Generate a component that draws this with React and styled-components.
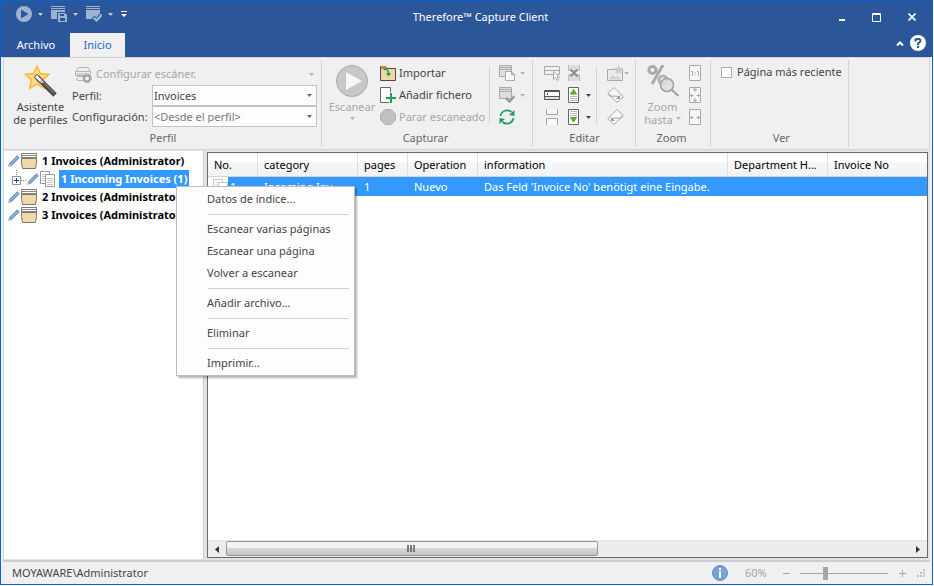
import React, { useState } from "react";
import styled, { createGlobalStyle, css } from "styled-components";

const GlobalStyle = createGlobalStyle`
  * {
    box-sizing: border-box;
  }
  body {
    margin: 0;
    background: #fff;
  }
  body, button, select, input, table {
    font-family: "Noto Sans", "Open Sans", sans-serif;
    font-size: 11px;
    line-height: 13px;
    color: #444;
  }
  button {
    margin: 0;
    padding: 0;
    border: 0;
    background: none;
  }
  svg {
    display: block;
    flex: none;
  }
`;

const Window = styled.div`
  display: flex;
  flex-direction: column;
  min-height: calc(100vh - 1px);
  margin: 0 1px 1px 0;
  border: 1px solid #0a64cc;
  background: #f0f0f0;
  position: relative;
`;

/* ---------- title bar ---------- */

const TitleBar = styled.header`
  display: flex;
  align-items: center;
  height: 32px;
  padding: 0 3px 0 15px;
  background: #2b579a;
  color: #fff;
`;

const QuickAccess = styled.div`
  display: flex;
  align-items: flex-start;
  width: 121px;
  height: 24px;
`;

const QuickButton = styled.button`
  display: flex;
  align-items: center;
  gap: 6px;
  width: ${(p) => p.$width || 35}px;
  height: 18px;
  color: #9fb3d3;
`;

const Title = styled.h1`
  flex: 1;
  margin: 0;
  text-align: center;
  font-size: 11px;
  font-weight: 400;
  line-height: 16px;
`;

const WindowButton = styled.button`
  display: flex;
  align-items: center;
  justify-content: center;
  width: 35px;
  height: 30px;
  color: #fff;
`;

const TabBar = styled.nav`
  display: flex;
  align-items: stretch;
  height: 24px;
  padding: 0 6px 0 1px;
  background: #2b579a;
`;

const Tab = styled.button`
  min-width: ${(p) => (p.$active ? 55 : 68)}px;
  padding: 0 12px 2px;
  color: #fff;
  ${(p) =>
    p.$active &&
    css`
      background: #f0f0f0;
      color: #1a66cc;
    `}
`;

const TabTools = styled.div`
  display: flex;
  align-items: center;
  gap: 6px;
  margin-left: auto;
  padding-bottom: 4px;
  color: #fff;
`;

/* ---------- ribbon ---------- */

const Ribbon = styled.section`
  display: flex;
  margin: 0 2px;
  border: 1px solid #d4d4d4;
`;

const Group = styled.div`
  display: flex;
  flex-direction: column;
  margin: 2px 0;
  padding: 2px ${(p) => p.$right || 0}px 0 ${(p) => p.$left || 0}px;
  border-right: 1px solid #d4d4d4;
`;

const GroupBody = styled.div`
  display: flex;
  min-height: 66px;
`;

const GroupLabel = styled.div`
  height: 19px;
  text-align: center;
  line-height: 19px;
  color: #666;
`;

const BigButton = styled.button`
  display: flex;
  flex-direction: column;
  align-items: center;
  width: ${(p) => p.$width}px;
  padding-top: 3px;
  white-space: nowrap;
  color: ${(p) => (p.disabled ? "#a6a6a6" : "#444")};
  svg:first-child {
    margin-bottom: 3px;
  }
`;

const CaptionRow = styled.span`
  display: flex;
  align-items: center;
  justify-content: center;
  gap: 3px;
  height: 13px;
`;

const Column = styled.div`
  display: flex;
  flex-direction: column;
  width: ${(p) => (p.$width ? `${p.$width}px` : "auto")};
`;

const Tool = styled.button`
  display: flex;
  align-items: center;
  gap: 3px;
  height: 22px;
  white-space: nowrap;
  color: ${(p) => (p.disabled ? "#a6a6a6" : "#444")};
`;

const ToolText = styled.span`
  padding-bottom: 2px;
`;

const ArrowTool = styled(Tool)`
  gap: 5px;
  padding-left: 5px;
`;

const IconTool = styled(Tool)`
  width: 24px;
  justify-content: center;
`;

const PageTool = styled(Tool)`
  gap: 6px;
  padding-left: 4px;
`;

const PictureTool = styled(Tool)`
  gap: 0;
  padding-left: 5px;
`;

const Divider = styled.div`
  width: 1px;
  margin: 5px ${(p) => p.$gap}px 4px;
  background: #d4d4d4;
`;

const ProfileForm = styled.div`
  display: grid;
  grid-template-columns: 80px 165px;
  grid-template-rows: 23px 21px 21px;
  align-items: center;
`;

const ScannerButton = styled(Tool)`
  grid-column: 1 / -1;
  gap: 4px;
  padding: 2px 3px 0;
  svg:last-child {
    margin-left: auto;
  }
`;

const SelectBox = styled.div`
  position: relative;
  svg {
    position: absolute;
    right: 5px;
    top: 9px;
    pointer-events: none;
  }
`;

const Select = styled.select`
  display: block;
  appearance: none;
  width: 100%;
  height: 21px;
  padding: 0 16px 0 1px;
  border: 1px solid #c3c3c3;
  border-radius: 0;
  background: #fdfdfd;
  color: ${(p) => (p.$muted ? "#777" : "#444")};
`;

const CheckLabel = styled.label`
  display: flex;
  align-items: center;
  gap: 5px;
  height: 20px;
  white-space: nowrap;
`;

const CheckBox = styled.input`
  appearance: none;
  width: 11px;
  height: 11px;
  margin: 0;
  border: 1px solid #ababab;
  background: #fff;
  &:checked {
    background: #1a66cc;
  }
`;

/* ---------- workspace ---------- */

const Workspace = styled.main`
  flex: 1;
  display: flex;
  gap: 3px;
  margin: 0 2px;
  padding: 1px 2px 1px 0;
  border-bottom: 2px solid #cdcdcd;
  border-left: 1px solid #d4d4d4;
  background: #e3e3e3;
`;

const TreePane = styled.ul`
  width: 200px;
  margin: 0;
  padding: 1px 0 0 4px;
  list-style: none;
  background: #fff;
  border-right: 1px solid #cdcdcd;
  overflow: hidden;
`;

const TreeRow = styled.li`
  display: flex;
  align-items: center;
  gap: 1px;
  height: 18px;
  white-space: nowrap;
  font-weight: 700;
  color: #000;
`;

const TreeText = styled.span`
  margin-left: 2px;
  padding: 0 2px;
  line-height: 18px;
  ${(p) =>
    p.$selected &&
    css`
      background: #3399ff;
      color: #fff;
    `}
`;

const ListPane = styled.section`
  flex: 1;
  min-width: 0;
  display: flex;
  flex-direction: column;
  margin: 1px 0;
  border: 1px solid #696969;
  background: #fff;
`;

const TableArea = styled.div`
  flex: 1;
  overflow: hidden;
`;

const Table = styled.table`
  width: 100%;
  table-layout: fixed;
  border-collapse: separate;
  border-spacing: 0;
  color: #000;
`;

const Th = styled.th`
  width: ${(p) => (p.$width ? `${p.$width}px` : "auto")};
  height: 24px;
  padding: 0 6px;
  text-align: left;
  font-weight: 400;
  white-space: nowrap;
  background: linear-gradient(#fff 0 38%, #f6f7f8 40%, #f1f2f4 100%);
  border-right: 1px solid #dfe0e2;
  border-bottom: 1px solid #d5d5d5;
  &:last-child {
    border-right: 0;
  }
`;

const Td = styled.td`
  height: 19px;
  padding: 0 6px;
  white-space: nowrap;
  overflow: hidden;
  text-overflow: ellipsis;
  background: #3399ff;
  color: #fff;
`;

const IconTd = styled(Td)`
  padding: 0 0 0 5px;
  background: linear-gradient(90deg, #fff 20px, #3399ff 20px);
`;

const NumberCell = styled.span`
  display: flex;
  align-items: center;
  gap: 1px;
`;

const ScrollBar = styled.div`
  display: flex;
  align-items: stretch;
  height: 17px;
  border-top: 1px solid #e3e3e3;
  background: #ececec;
`;

const ScrollArrow = styled.button`
  display: flex;
  align-items: center;
  justify-content: center;
  width: 18px;
  color: #333;
`;

const ScrollTrack = styled.div`
  flex: 1;
`;

const ScrollThumb = styled.div`
  display: flex;
  align-items: center;
  justify-content: center;
  width: 54.4%;
  height: 15px;
  border: 1px solid #979797;
  border-radius: 2px;
  background: linear-gradient(#f3f3f3 0 45%, #d8d8da 50%, #c3c4c7);
`;

/* ---------- context menu ---------- */

const Menu = styled.div`
  position: absolute;
  left: 175px;
  top: 185px;
  width: 179px;
  padding: 1px 5px 1px 30px;
  border: 1px solid #bcbcbc;
  background: #fdfdfd;
  box-shadow: 2px 2px 2px rgba(0, 0, 0, 0.3);
`;

const MenuItem = styled.button`
  display: block;
  width: 100%;
  height: 22px;
  padding-bottom: 2px;
  text-align: left;
`;

const MenuLine = styled.hr`
  height: 1px;
  margin: 4px 0 3px 1px;
  border: 0;
  background: #d0d0d0;
`;

/* ---------- status bar ---------- */

const StatusBar = styled.footer`
  display: flex;
  align-items: center;
  height: 22px;
  padding: 0 6px 0 11px;
`;

const StatusText = styled.span`
  padding-bottom: 2px;
`;

const ZoomTools = styled.div`
  display: flex;
  align-items: center;
  margin-left: auto;
  color: #a6a6a6;
`;

const ZoomValue = styled.output`
  width: 35px;
  margin-left: 17px;
  padding-bottom: 2px;
`;

const StepButton = styled.button`
  display: flex;
  align-items: center;
  justify-content: center;
  width: 12px;
  height: 16px;
  color: #a6a6a6;
`;

const Slider = styled.input`
  appearance: none;
  width: 88px;
  height: 14px;
  margin: 0 8px;
  background: linear-gradient(#a6a6a6, #a6a6a6) center / 100% 1px no-repeat;
  &::-webkit-slider-thumb {
    appearance: none;
    width: 5px;
    height: 13px;
    background: #a6a6a6;
  }
`;

const Grip = styled.svg`
  margin-left: 9px;
  align-self: flex-end;
`;

/* ---------- icons ---------- */

const Icon = ({ w = 16, h = 16, children }) => (
  <svg width={w} height={h} viewBox={`0 0 ${w} ${h}`} fill="none" aria-hidden="true">
    {children}
  </svg>
);

const Caret = ({ color = "#444" }) => (
  <Icon w={5} h={3}>
    <path d="M0 0h5L2.5 3z" fill={color} />
  </Icon>
);

const GRAY = "#a9a9a9";

const PlayQuick = () => (
  <Icon>
    <circle cx="8" cy="8" r="8" fill="#9fb3d3" />
    <path d="M5 3.5v9L12.5 8z" fill="#2b579a" />
  </Icon>
);

const DocLines = ({ color, lines }) => (
  <>
    <path d="M0 0h14v13H0z" fill={color} />
    <path d="M0 1.5h14M0 3.5h14" stroke={lines} />
  </>
);

const SaveQuick = () => (
  <Icon>
    <DocLines color="#9fb3d3" lines="#2b579a" />
    <path d="M6 6h8l2 2v8H6z" fill="#2b579a" />
    <path d="M7 7h7l2 2v7H7z" fill="#9fb3d3" />
    <path d="M9 8h4v2H9zM9 12h5v3H9z" fill="#2b579a" />
  </Icon>
);

const CheckQuick = () => (
  <Icon>
    <DocLines color="#9fb3d3" lines="#2b579a" />
    <path d="M7 11l3.5 3.5L16 8" stroke="#2b579a" strokeWidth="4" />
    <path d="M7.5 11.5l3 3L16 8.5" stroke="#9fb3d3" strokeWidth="2.4" />
  </Icon>
);

const Wand = () => (
  <Icon w={34} h={32}>
    <path d="M13 1l3.400 7.500 8.400.8-6.300 5.700 1.800 8.300L13 19l-7.300 4.300 1.800-8.300L1.200 9.300l8.400-.8z" fill="#fddc7c" stroke="#fbb638" strokeWidth="1.500" />
    <path d="M13 12l18 18" stroke="#4a4a4a" strokeWidth="5" />
    <path d="M17 15l13 13" stroke="#777" strokeWidth="1.500" />
    <path d="M13 12l4.500 4.500" stroke="#fff" strokeWidth="3" strokeLinecap="round" />
    <path d="M11.500 10.500l2-1 5 5.500-3 3-5-5.500z" stroke="#4a4a4a" />
  </Icon>
);

const Scanner = () => (
  <Icon w={17} h={17}>
    <path d="M1.500 5.500L3 1.500h10l2.500 4zM.5 5.500h15v4H.5zM2 10.500h6M1.500 12l1 2.500H8" fill="#eee" stroke="#b5b5b5" />
    <path d="M2 8h12" stroke="#b5b5b5" />
    <circle cx="12" cy="12.5" r="3" stroke="#a0a0a0" strokeWidth="2" fill="#eee" />
    <circle cx="12" cy="12.5" r="4.3" stroke="#a0a0a0" strokeDasharray="1.7 1.7" />
  </Icon>
);

const PlayBig = () => (
  <Icon w={32} h={32}>
    <circle cx="16" cy="16" r="15.5" fill="#c8c8c8" stroke="#a9a9a9" />
    <path d="M10 7v18l16-9z" fill="#f7f7f7" />
  </Icon>
);

const ImportIcon = () => (
  <Icon>
    <path d="M.5 15.5v-14h5l1.500 2h8.500v12z" fill="#efd8a8" stroke="#55483c" />
    <path d="M1 3V1h4.500L7 4H1z" fill="#c08a50" />
    <path d="M3.500 4.500c3.500-1 5.500 1 5 5" stroke="#1f9a55" strokeWidth="1.400" />
    <path d="M6 8h5l-2.500 3.500z" fill="#1f9a55" />
  </Icon>
);

const AddFile = () => (
  <Icon>
    <path d="M.5.5h10v15H.5z" fill="#fff" stroke="#666" />
    <path d="M11 5v11M5 11h11" stroke="#f4f4f4" strokeWidth="4" />
    <path d="M11 6v10M6 11h10" stroke="#1f9f59" strokeWidth="2" />
  </Icon>
);

const StopIcon = () => (
  <Icon>
    <path d="M5 .5h6L15.500 5v6L11 15.500H5L.5 11V5z" fill="#c0c0c0" stroke="#b0b0b0" />
  </Icon>
);

const DocStack = ({ check }) => (
  <Icon>
    <path d="M.5.5h12v11H.5z" fill="#dedede" stroke={GRAY} />
    <path d="M0 2.500h13M0 4.500h13" stroke={GRAY} />
    {check ? (
      <path d="M7 11l3.500 3.500L15.500 9" stroke="#9c9c9c" strokeWidth="2.500" />
    ) : (
      <path d="M6.500 6.500h6l3 3v6h-9zM12.500 6.500v3h3" fill="#f7f7f7" stroke={GRAY} />
    )}
  </Icon>
);

const Refresh = () => (
  <Icon>
    <path d="M1.500 7A6.700 6.700 0 0 1 12.500 3M14.500 9A6.700 6.700 0 0 1 3.500 13" stroke="#1f9f59" strokeWidth="1.700" />
    <path d="M15.500 1v6l-5.500-1zM.5 15V9l5.500 1z" fill="#1f9f59" />
  </Icon>
);

const SelectField = () => (
  <Icon>
    <path d="M.5 1.500h15v8H.5zM1 5.500h14" stroke={GRAY} />
    <path d="M9.500 6.500v8l2-2 1.500 3 1.500-1-1.500-2.500h2.500z" fill="#fff" stroke={GRAY} />
  </Icon>
);

const FieldIcon = () => (
  <Icon>
    <path d="M.5 3.500h15v9H.5z" fill="#fff" stroke="#555" />
    <path d="M0 4.500h16M0 9.500h16M3.500 6v2" stroke="#555" />
    <path d="M1 10h14v2H1z" fill="#dcdcdc" />
  </Icon>
);

const SplitDoc = ({ cross }) => (
  <Icon w={12}>
    <path d="M.5 0v5.500h11V0M.5 16V9.500h11V16" fill={cross ? "#ddd" : "#f7f7f7"} stroke={cross ? "#bcbcbc" : GRAY} />
    {cross && <path d="M2.500 4.500l7 7M9.500 4.500l-7 7" stroke="#8d8d8d" strokeWidth="2" />}
  </Icon>
);

const MovePage = ({ down }) => (
  <Icon w={12}>
    <path d="M.5.5h10v15H.5z" fill="#fff" stroke="#666" />
    <path d={down ? "M2 2.5h7M2 4.5h7M2 6.5h7" : "M2 9.5h7M2 11.5h7M2 13.5h7"} stroke="#bbb" />
    <path d={down ? "M2.500 8.500h6L5.500 13z" : "M2.500 7h6L5.500 2.500z"} fill="#7ab800" stroke="#3fa535" />
  </Icon>
);

const PictureStar = () => (
  <Icon w={17}>
    <path d="M.5 4.500h15v11H.5z" fill="#ececec" stroke={GRAY} />
    <path d="M1.500 14.500l4-5 3 3 2.500-2 3.500 4z" fill="#d2d2d2" />
    <path d="M11.500 0l1.500 3 3.500.3-2.500 2.400.6 3.300-3.100-1.600L8.400 9 9 5.700 6.500 3.300 10 3z" fill="#cbcbcb" />
  </Icon>
);

const Rotate = ({ left }) => (
  <Icon w={17}>
    <g transform={left ? "matrix(-1 0 0 1 17 0)" : undefined}>
      <path d="M7 .6l9.300 9.200-6.300 5.700L.7 6.500z" fill="#f8f8f8" stroke={GRAY} />
      <path d="M1.500 6.500C4 12 9 7 12 10.500" stroke="#999" />
      <path d="M13 8v4H9z" fill="#999" />
    </g>
  </Icon>
);

const ZoomBig = () => (
  <Icon w={34} h={32}>
    <circle cx="6.5" cy="5" r="3.6" stroke="#aaa" strokeWidth="3" />
    <path d="M17 0L6 19" stroke="#aaa" strokeWidth="3" />
    <circle cx="17" cy="15" r="4" stroke="#b5b5b5" strokeWidth="3" />
    <circle cx="21" cy="20" r="6.5" fill="#ddd" fillOpacity=".85" stroke="#a0a0a0" strokeWidth="1.500" />
    <path d="M26 25l6.500 6" stroke="#a0a0a0" strokeWidth="2" />
  </Icon>
);

const ZoomOne = () => (
  <Icon w={12}>
    <path d="M.5.5h11v15H.5z" fill="#f7f7f7" stroke={GRAY} />
    <path d="M2 6.500h1.500V11M8 6.500h1.500V11M6 7v1M6 9v1" stroke={GRAY} />
  </Icon>
);

const FitIcon = ({ page }) => (
  <Icon w={12}>
    <path d="M.5.5h11v15H.5z" fill="#f7f7f7" stroke={GRAY} />
    <path d="M1 8.500h3.500M7.500 8.500H11M2.500 7v3M9.500 7v3" stroke={GRAY} />
    {page && <path d="M6 1v4M6 11v4M4 2.500h4M4 13.500h4" stroke={GRAY} />}
  </Icon>
);

const Pencil = () => (
  <Icon w={12} h={12}>
    <path d="M2 10L10.500 1.500" stroke="#5b82b0" strokeWidth="3.400" />
    <path d="M2 10L10.300 1.700" stroke="#8fb2da" strokeWidth="1.800" />
    <path d="M0 12l1-3.500L3.500 11z" fill="#b9ad97" />
  </Icon>
);

const BoxIcon = () => (
  <Icon w={16} h={16}>
    <path d="M.5.5h15v5H.5z" fill="#fff" stroke="#777" />
    <path d="M0 2.500h16M0 4.500h16" stroke="#888" />
    <path d="M.5 5.500h15v4l-1 6h-13l-1-6z" fill="#efd9ac" stroke="#8a7355" />
  </Icon>
);

const PagesIcon = ({ faded }) => (
  <Icon w={16} h={16}>
    <g opacity={faded ? 0.55 : 1}>
      <path d="M.5.5h9v12h-9z" fill="#fff" stroke="#999" />
      <path d="M2 3.500h4M2 5.500h4M2 7.500h4M2 9.500h4" stroke="#c4c4c4" />
      <path d="M5.500 3.500h9v12h-9z" fill="#fff" stroke="#999" />
      <path d="M7 7.500h6M7 9.500h6M7 11.500h6M7 13.500h6" stroke="#c4c4c4" />
    </g>
  </Icon>
);

const Branch = () => (
  <Icon w={18} h={18}>
    <path d="M8.500 0v6M13 10.500h5" stroke="#888" strokeDasharray="1 1" />
    <path d="M4.500 6.500h8v8h-8z" fill="#fff" stroke="#919191" />
    <path d="M6 10.500h5M8.500 8v5" stroke="#23458c" />
  </Icon>
);

/* ---------- data ---------- */

const columns = [
  { name: "No.", width: 50 },
  { name: "category", width: 100 },
  { name: "pages", width: 50 },
  { name: "Operation", width: 70 },
  { name: "information", width: 250 },
  { name: "Department H...", width: 100 },
  { name: "Invoice No" },
];

const menuGroups = [
  ["Datos de índice..."],
  ["Escanear varias páginas", "Escanear una página", "Volver a escanear"],
  ["Añadir archivo..."],
  ["Eliminar"],
  ["Imprimir..."],
];

/* ---------- sections ---------- */

const Header = () => (
  <>
    <TitleBar>
      <QuickAccess>
        <QuickButton aria-label="Escanear">
          <PlayQuick />
          <Caret color="#c9c9c9" />
        </QuickButton>
        <QuickButton aria-label="Guardar">
          <SaveQuick />
          <Caret color="#c9c9c9" />
        </QuickButton>
        <QuickButton aria-label="Comprobar">
          <CheckQuick />
          <Caret color="#c9c9c9" />
        </QuickButton>
        <QuickButton $width={7} aria-label="Personalizar">
          <Icon w={6} h={6}>
            <path d="M0 .5h6" stroke="#fff" />
            <path d="M0 3h6L3 6z" fill="#fff" />
          </Icon>
        </QuickButton>
      </QuickAccess>
      <Title>Therefore™ Capture Client</Title>
      <WindowButton aria-label="Minimizar">
        <Icon w={10} h={10}>
          <path d="M2 7h6v2H2z" fill="#fff" />
        </Icon>
      </WindowButton>
      <WindowButton aria-label="Maximizar">
        <Icon w={9} h={9}>
          <path d="M.5.5h8v8h-8zM0 1.500h9" stroke="#fff" />
        </Icon>
      </WindowButton>
      <WindowButton aria-label="Cerrar">
        <Icon w={8} h={8}>
          <path d="M.5.5l7 7M7.500.5l-7 7" stroke="#fff" strokeWidth="1.600" />
        </Icon>
      </WindowButton>
    </TitleBar>
    <TabBar>
      <Tab>Archivo</Tab>
      <Tab $active>Inicio</Tab>
      <TabTools>
        <button aria-label="Contraer la cinta">
          <Icon w={8} h={5}>
            <path d="M1 4.500l3-3 3 3" stroke="#fff" strokeWidth="2" />
          </Icon>
        </button>
        <button aria-label="Ayuda">
          <Icon>
            <circle cx="8" cy="8" r="8" fill="#fff" />
            <path d="M5.500 6.500V4.500h1l.5-.5h2.500l.8 1v1.500L8 8.500V10" stroke="#2b579a" strokeWidth="2" />
            <path d="M7 11h2v2H7z" fill="#2b579a" />
          </Icon>
        </button>
      </TabTools>
    </TabBar>
  </>
);

const ProfileGroup = () => (
  <Group $left={5} $right={4}>
    <GroupBody>
      <BigButton $width={63}>
        <Wand />
        <CaptionRow>Asistente</CaptionRow>
        <CaptionRow>de perfiles</CaptionRow>
      </BigButton>
      <ProfileForm>
        <ScannerButton disabled>
          <Scanner />
          <ToolText>Configurar escáner.</ToolText>
          <Caret color="#b5b5b5" />
        </ScannerButton>
        <label htmlFor="profile">Perfil:</label>
        <SelectBox>
          <Select id="profile">
            <option>Invoices</option>
          </Select>
          <Caret color="#666" />
        </SelectBox>
        <label htmlFor="config">Configuración:</label>
        <SelectBox>
          <Select id="config" $muted>
            <option>&lt;Desde el perfil&gt;</option>
          </Select>
          <Caret color="#666" />
        </SelectBox>
      </ProfileForm>
    </GroupBody>
    <GroupLabel>Perfil</GroupLabel>
  </Group>
);

const CaptureGroup = () => (
  <Group $left={2} $right={5}>
    <GroupBody>
      <BigButton $width={56} disabled>
        <PlayBig />
        <CaptionRow>Escanear</CaptionRow>
        <CaptionRow>
          <Caret color="#b5b5b5" />
        </CaptionRow>
      </BigButton>
      <Column $width={105}>
        <Tool>
          <ImportIcon />
          <ToolText>Importar</ToolText>
        </Tool>
        <Tool>
          <AddFile />
          <ToolText>Añadir fichero</ToolText>
        </Tool>
        <Tool disabled>
          <StopIcon />
          <ToolText>Parar escaneado</ToolText>
        </Tool>
      </Column>
      <Divider $gap={4} />
      <Column $width={33}>
        <ArrowTool disabled aria-label="Guardar">
          <DocStack />
          <Caret color="#b5b5b5" />
        </ArrowTool>
        <ArrowTool disabled aria-label="Comprobar">
          <DocStack check />
          <Caret color="#b5b5b5" />
        </ArrowTool>
        <ArrowTool aria-label="Actualizar">
          <Refresh />
        </ArrowTool>
      </Column>
    </GroupBody>
    <GroupLabel>Capturar</GroupLabel>
  </Group>
);

const EditGroup = () => (
  <Group $left={7} $right={6}>
    <GroupBody>
      <Column>
        <IconTool disabled aria-label="Seleccionar campo">
          <SelectField />
        </IconTool>
        <IconTool aria-label="Campo">
          <FieldIcon />
        </IconTool>
        <IconTool disabled aria-label="Dividir">
          <SplitDoc />
        </IconTool>
      </Column>
      <Column $width={27}>
        <PageTool disabled aria-label="Eliminar división">
          <SplitDoc cross />
        </PageTool>
        <PageTool aria-label="Página anterior">
          <MovePage />
          <Caret />
        </PageTool>
        <PageTool aria-label="Página siguiente">
          <MovePage down />
          <Caret />
        </PageTool>
      </Column>
      <Divider $gap={5} />
      <Column>
        <PictureTool disabled aria-label="Imagen">
          <PictureStar />
          <Caret color="#b5b5b5" />
        </PictureTool>
        <PictureTool disabled aria-label="Girar a la derecha">
          <Rotate />
        </PictureTool>
        <PictureTool disabled aria-label="Girar a la izquierda">
          <Rotate left />
        </PictureTool>
      </Column>
    </GroupBody>
    <GroupLabel>Editar</GroupLabel>
  </Group>
);

const ZoomGroup = () => (
  <Group $right={3}>
    <GroupBody>
      <BigButton $width={53} disabled>
        <ZoomBig />
        <CaptionRow>Zoom</CaptionRow>
        <CaptionRow>
          hasta
          <Caret color="#b5b5b5" />
        </CaptionRow>
      </BigButton>
      <Column $width={18}>
        <Tool disabled aria-label="Tamaño real">
          <ZoomOne />
        </Tool>
        <Tool disabled aria-label="Ajustar a la página">
          <FitIcon page />
        </Tool>
        <Tool disabled aria-label="Ajustar al ancho">
          <FitIcon />
        </Tool>
      </Column>
    </GroupBody>
    <GroupLabel>Zoom</GroupLabel>
  </Group>
);

const ViewGroup = () => {
  const [latest, setLatest] = useState(false);
  return (
    <Group $left={10} $right={6}>
      <GroupBody>
        <CheckLabel>
          <CheckBox type="checkbox" checked={latest} onChange={() => setLatest(!latest)} />
          <ToolText>Página más reciente</ToolText>
        </CheckLabel>
      </GroupBody>
      <GroupLabel>Ver</GroupLabel>
    </Group>
  );
};

const Tree = () => (
  <TreePane>
    <TreeRow>
      <Pencil />
      <BoxIcon />
      <TreeText>1 Invoices (Administrator)</TreeText>
    </TreeRow>
    <TreeRow>
      <Branch />
      <Pencil />
      <PagesIcon />
      <TreeText $selected>1 Incoming Invoices (1)</TreeText>
    </TreeRow>
    {[2, 3].map((n) => (
      <TreeRow key={n}>
        <Pencil />
        <BoxIcon />
        <TreeText>{n} Invoices (Administrator)</TreeText>
      </TreeRow>
    ))}
  </TreePane>
);

const DocumentList = () => (
  <ListPane>
    <TableArea>
      <Table>
        <thead>
          <tr>
            {columns.map((c) => (
              <Th key={c.name} $width={c.width}>
                {c.name}
              </Th>
            ))}
          </tr>
        </thead>
        <tbody>
          <tr>
            <IconTd>
              <NumberCell>
                <PagesIcon faded />1
              </NumberCell>
            </IconTd>
            <Td>Incoming Inv...</Td>
            <Td>1</Td>
            <Td>Nuevo</Td>
            <Td>Das Feld 'Invoice No' benötigt eine Eingabe.</Td>
            <Td />
            <Td />
          </tr>
        </tbody>
      </Table>
    </TableArea>
    <ScrollBar>
      <ScrollArrow aria-label="Desplazar a la izquierda">
        <Icon w={4} h={7}>
          <path d="M4 0v7L0 3.5z" fill="#333" />
        </Icon>
      </ScrollArrow>
      <ScrollTrack>
        <ScrollThumb>
          <Icon w={9} h={7}>
            <path d="M1 0v7M4 0v7M7 0v7" stroke="#555" strokeWidth="1.500" />
          </Icon>
        </ScrollThumb>
      </ScrollTrack>
      <ScrollArrow aria-label="Desplazar a la derecha">
        <Icon w={4} h={7}>
          <path d="M0 0v7l4-3.500z" fill="#333" />
        </Icon>
      </ScrollArrow>
    </ScrollBar>
  </ListPane>
);

const ContextMenu = () => (
  <Menu role="menu">
    {menuGroups.map((items, i) => (
      <React.Fragment key={items[0]}>
        {i > 0 && <MenuLine />}
        {items.map((item) => (
          <MenuItem key={item} role="menuitem">
            {item}
          </MenuItem>
        ))}
      </React.Fragment>
    ))}
  </Menu>
);

const Status = () => {
  const [zoom, setZoom] = useState(60);
  return (
    <StatusBar>
      <StatusText>MOYAWARE\Administrator</StatusText>
      <ZoomTools>
        <Icon>
          <circle cx="8" cy="8" r="7.5" fill="#7aa3dc" stroke="#5f8ccb" />
          <path d="M7 3h2v2H7zM7 6h2v7H7z" fill="#fff" />
        </Icon>
        <ZoomValue>{zoom}%</ZoomValue>
        <StepButton aria-label="Reducir" onClick={() => setZoom(Math.max(0, zoom - 10))}>
          <Icon w={7} h={7}>
            <path d="M0 3.500h7" stroke="#a6a6a6" />
          </Icon>
        </StepButton>
        <Slider
          type="range"
          min="0"
          max="220"
          value={zoom}
          aria-label="Zoom"
          onChange={(e) => setZoom(Number(e.target.value))}
        />
        <StepButton aria-label="Ampliar" onClick={() => setZoom(Math.min(220, zoom + 10))}>
          <Icon w={7} h={7}>
            <path d="M0 3.500h7M3.500 0v7" stroke="#a6a6a6" />
          </Icon>
        </StepButton>
        <Grip width="9" height="12" viewBox="0 0 9 12">
          <path d="M6 0h2v2H6zM3 3h2v2H3zM6 3h2v2H6zM0 6h2v2H0zM3 6h2v2H3zM6 6h2v2H6z" fill="#c3c3c3" />
        </Grip>
      </ZoomTools>
    </StatusBar>
  );
};

export default function App() {
  return (
    <>
      <GlobalStyle />
      <Window>
        <Header />
        <Ribbon>
          <ProfileGroup />
          <CaptureGroup />
          <EditGroup />
          <ZoomGroup />
          <ViewGroup />
        </Ribbon>
        <Workspace>
          <Tree />
          <DocumentList />
        </Workspace>
        <Status />
        <ContextMenu />
      </Window>
    </>
  );
}
